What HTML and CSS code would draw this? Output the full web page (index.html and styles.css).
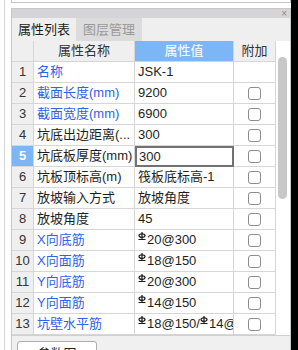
FILE: index.html
```html
<!DOCTYPE html>
<html lang="zh-CN">
<head>
    <meta charset="UTF-8">
    <title>属性列表</title>
    <link rel="stylesheet" href="styles.css">
</head>
<body>
<div class="screen">
    <div class="gutter"></div>
    <div class="main">
        <div class="topbox"></div>
        <div class="panel">
            <div class="titlebar"><span class="close">×</span></div>
            <div class="tabs">
                <div class="tab active">属性列表</div>
                <div class="tab">图层管理</div>
            </div>
            <div class="grid-wrap">
                <div class="grid">
                    <div class="cell head"></div>
                    <div class="cell head">属性名称</div>
                    <div class="cell head sel">属性值</div>
                    <div class="cell head">附加</div>

                    <div class="cell num">1</div>
                    <div class="cell name blue">名称</div>
                    <div class="cell val">JSK-1</div>
                    <div class="cell add"></div>

                    <div class="cell num">2</div>
                    <div class="cell name blue">截面长度(mm)</div>
                    <div class="cell val">9200</div>
                    <div class="cell add"><span class="chk"></span></div>

                    <div class="cell num">3</div>
                    <div class="cell name blue">截面宽度(mm)</div>
                    <div class="cell val">6900</div>
                    <div class="cell add"><span class="chk"></span></div>

                    <div class="cell num">4</div>
                    <div class="cell name">坑底出边距离(...</div>
                    <div class="cell val">300</div>
                    <div class="cell add"><span class="chk"></span></div>

                    <div class="cell num sel">5</div>
                    <div class="cell name">坑底板厚度(mm)</div>
                    <div class="cell val editing">300</div>
                    <div class="cell add"><span class="chk"></span></div>

                    <div class="cell num">6</div>
                    <div class="cell name">坑板顶标高(m)</div>
                    <div class="cell val">筏板底标高-1</div>
                    <div class="cell add"><span class="chk"></span></div>

                    <div class="cell num">7</div>
                    <div class="cell name">放坡输入方式</div>
                    <div class="cell val">放坡角度</div>
                    <div class="cell add"><span class="chk"></span></div>

                    <div class="cell num">8</div>
                    <div class="cell name">放坡角度</div>
                    <div class="cell val">45</div>
                    <div class="cell add"><span class="chk"></span></div>

                    <div class="cell num">9</div>
                    <div class="cell name blue">X向底筋</div>
                    <div class="cell val"><svg class="rebar" viewBox="0 0 8 8"><path d="M4 0V7.5M0.5 7.5H7.5"/><ellipse cx="4" cy="3.6" rx="3" ry="1.8"/></svg>20@300</div>
                    <div class="cell add"><span class="chk"></span></div>

                    <div class="cell num">10</div>
                    <div class="cell name blue">X向面筋</div>
                    <div class="cell val"><svg class="rebar" viewBox="0 0 8 8"><path d="M4 0V7.5M0.5 7.5H7.5"/><ellipse cx="4" cy="3.6" rx="3" ry="1.8"/></svg>18@150</div>
                    <div class="cell add"><span class="chk"></span></div>

                    <div class="cell num">11</div>
                    <div class="cell name blue">Y向底筋</div>
                    <div class="cell val"><svg class="rebar" viewBox="0 0 8 8"><path d="M4 0V7.5M0.5 7.5H7.5"/><ellipse cx="4" cy="3.6" rx="3" ry="1.8"/></svg>20@300</div>
                    <div class="cell add"><span class="chk"></span></div>

                    <div class="cell num">12</div>
                    <div class="cell name blue">Y向面筋</div>
                    <div class="cell val"><svg class="rebar" viewBox="0 0 8 8"><path d="M4 0V7.5M0.5 7.5H7.5"/><ellipse cx="4" cy="3.6" rx="3" ry="1.8"/></svg>14@150</div>
                    <div class="cell add"><span class="chk"></span></div>

                    <div class="cell num">13</div>
                    <div class="cell name blue">坑壁水平筋</div>
                    <div class="cell val"><svg class="rebar" viewBox="0 0 8 8"><path d="M4 0V7.5M0.5 7.5H7.5"/><ellipse cx="4" cy="3.6" rx="3" ry="1.8"/></svg>18@150/<svg class="rebar" viewBox="0 0 8 8"><path d="M4 0V7.5M0.5 7.5H7.5"/><ellipse cx="4" cy="3.6" rx="3" ry="1.8"/></svg>14@150</div>
                    <div class="cell add"><span class="chk"></span></div>
                </div>
                <div class="scroll"><div class="thumb"></div></div>
            </div>
            <div class="footer"><button class="btn">参数图</button></div>
        </div>
    </div>
</div>
</body>
</html>
```

FILE: styles.css
```css
/* Global Styles */
body {
    margin: 0;
    background-color: #000;
    font-family: "Liberation Sans", "Noto Sans CJK SC", sans-serif;
    font-size: 13px;
    color: #222;
}

.screen {
    display: flex;
    width: 291px;
    height: 350px;
    background-color: #fff;
    overflow: hidden;
}

.gutter {
    width: 7px;
    margin-left: 4px;
    border-left: 1px solid #d4d4d4;
    box-sizing: border-box;
}

.main {
    width: 280px;
}

.topbox {
    height: 3px;
    border: 1px solid #c4c4c4;
    border-top: none;
    box-sizing: border-box;
    margin-bottom: 5px;
}

/* Panel */
.panel {
    border: 1px solid #c8c8c8;
    border-bottom: none;
    height: 342px;
    box-sizing: border-box;
    background-color: #f0f0f0;
}

.titlebar {
    height: 9px;
    background-color: #d5d5d8;
    display: flex;
    justify-content: flex-end;
    align-items: center;
    padding-right: 3px;
}

.close {
    font-size: 10px;
    line-height: 9px;
    color: #8a8a8a;
}

.tabs {
    display: flex;
    height: 23px;
    background-color: #efefef;
}

.tab {
    width: 66px;
    line-height: 23px;
    text-align: center;
    color: #9a9a9a;
    background-color: #dcdcdc;
    font-size: 13px;
}

.tab.active {
    width: 64px;
    color: #1e1e1e;
    background-color: #efefef;
}

/* Property grid */
.grid-wrap {
    display: flex;
    height: 294px;
    border-bottom: 1px solid #d0d0d0;
}

.grid {
    display: grid;
    grid-template-columns: 22px 101px 99px 42px;
    grid-auto-rows: 21px;
    background-color: #fff;
}

.cell {
    box-sizing: border-box;
    border-right: 1px solid #d6d6d6;
    border-bottom: 1px solid #d6d6d6;
    line-height: 20px;
    white-space: nowrap;
    overflow: hidden;
}

.head {
    background-color: #efefef;
    text-align: center;
    color: #333;
}

.head.sel {
    background-color: #7db6f6;
    color: #fff;
}

.num {
    background-color: #efefef;
    text-align: center;
    color: #333;
}

.num.sel {
    background-color: #7db6f6;
    color: #fff;
    font-weight: bold;
}

.name {
    padding-left: 3px;
    color: #1e1e1e;
}

.name.blue {
    color: #2f62e6;
}

.val {
    padding-left: 3px;
    color: #1e1e1e;
}

.val.editing {
    border: 2px solid #727272;
    line-height: 17px;
    padding-left: 2px;
}

.rebar {
    width: 8px;
    height: 8px;
    vertical-align: 4px;
    margin-right: 1px;
    fill: none;
    stroke: #1a1a1a;
    stroke-width: 1.2;
}

.add {
    display: flex;
    align-items: center;
    justify-content: center;
}

.chk {
    width: 13px;
    height: 13px;
    box-sizing: border-box;
    border: 1px solid #8c8c8c;
    border-radius: 3px;
    background-color: #fff;
}

/* Scrollbar */
.scroll {
    width: 14px;
    background-color: #fff;
    padding-top: 16px;
    box-sizing: border-box;
}

.thumb {
    width: 9px;
    height: 142px;
    margin-left: 2px;
    border-radius: 5px;
    background-color: #c8c8c8;
}

/* Footer */
.footer {
    padding: 5px 0 0 5px;
}

.btn {
    width: 80px;
    height: 22px;
    background-color: #fff;
    border: 1px solid #adadad;
    border-radius: 3px;
    font-family: inherit;
    font-size: 13px;
    color: #222;
    padding: 0;
}
```
